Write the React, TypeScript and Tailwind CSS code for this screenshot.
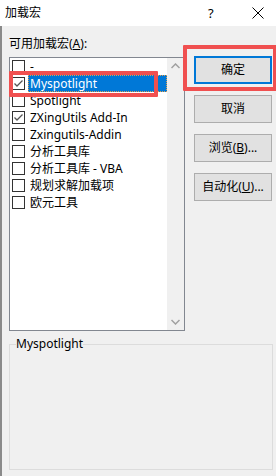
import React from "react";

const FONT = { fontFamily: '"Noto Sans", "Noto Sans CJK SC", sans-serif' };

type Item = { label: string; checked: boolean; selected?: boolean };

const items: Item[] = [
  { label: "-", checked: false },
  { label: "Myspotlight", checked: true, selected: true },
  { label: "Spotlight", checked: false },
  { label: "ZXingUtils Add-In", checked: true },
  { label: "Zxingutils-Addin", checked: false },
  { label: "分析工具库", checked: false },
  { label: "分析工具库 - VBA", checked: false },
  { label: "规划求解加载项", checked: false },
  { label: "欧元工具", checked: false },
];

function Box({ checked }: { checked: boolean }) {
  return (
    <div className="w-[13px] h-[13px] border border-[#333333] bg-white flex items-center justify-center shrink-0">
      {checked && (
        <svg width="11" height="11" viewBox="0 0 11 11">
          <polyline points="1.5,5.5 4,8 9.5,2.5" fill="none" stroke="#555555" strokeWidth="1.3" />
        </svg>
      )}
    </div>
  );
}

function Btn({ children, primary }: { children: React.ReactNode; primary?: boolean }) {
  return (
    <div
      className={
        "w-[78px] h-[28px] flex items-center justify-center bg-[#e1e1e1] text-[12px] text-black " +
        (primary ? "border-2 border-[#0078d7]" : "border border-[#adadad]")
      }
    >
      {children}
    </div>
  );
}

export default function App() {
  return (
    <div className="w-[276px] h-[476px] bg-[#f0f0f0] overflow-hidden text-black" style={FONT}>
      {/* title bar */}
      <div className="h-[26px] bg-white flex items-center pl-[5px] relative">
        <span className="text-[12px] leading-none">加载宏</span>
        <span className="absolute left-[208px] top-[5px] text-[13px] leading-[16px]">?</span>
        <svg className="absolute left-[252px] top-[7px]" width="12" height="12" viewBox="0 0 12 12">
          <path d="M0.5 0.5 L11.5 11.5 M11.5 0.5 L0.5 11.5" stroke="#000" strokeWidth="1" />
        </svg>
      </div>
      {/* body */}
      <div className="h-[450px] border-l-2 border-[#8a8a8a] pl-[7px] pt-[10px]">
        <div className="flex gap-[9px]">
          <div className="flex flex-col w-[176px]">
            <div className="h-[16px] leading-[16px] text-[12px]">
              可用加载宏(<span className="underline">A</span>):
            </div>
            <div className="relative mt-[5px] h-[274px] border border-[#828790] bg-white flex">
              <div className="flex-1 flex flex-col pt-[0px]">
                {items.map((it) => (
                  <div key={it.label} className="h-[17px] flex items-center pl-[2px]">
                    <Box checked={it.checked} />
                    {it.selected ? (
                      <div className="ml-[3px] flex-1 h-[17px] bg-[#0078d7] border border-dotted border-[#e0a050] text-white text-[12px] leading-[15px] pl-[1px]">
                        {it.label}
                      </div>
                    ) : (
                      <div className="ml-[3px] text-[12px] leading-[17px] pl-[2px]">{it.label}</div>
                    )}
                  </div>
                ))}
              </div>
              <div className="w-[17px] bg-[#f0f0f0] flex flex-col items-center justify-between py-[5px]">
                <svg width="9" height="6" viewBox="0 0 9 6">
                  <polyline points="0.5,5 4.5,1 8.5,5" fill="none" stroke="#a0a0a0" strokeWidth="1.5" />
                </svg>
                <svg width="9" height="6" viewBox="0 0 9 6">
                  <polyline points="0.5,1 4.5,5 8.5,1" fill="none" stroke="#a0a0a0" strokeWidth="1.5" />
                </svg>
              </div>
              {/* annotation */}
              <div className="absolute left-[-1px] top-[13px] w-[149px] h-[26px] border-4 border-[#f05050] rounded-[1px] pointer-events-none" />
            </div>
          </div>
          <div className="relative flex flex-col gap-[11px] mt-[20px]">
            <Btn primary>确定</Btn>
            <Btn>取消</Btn>
            <Btn>
              浏览(<span className="underline">B</span>)...
            </Btn>
            <Btn>
              自动化(<span className="underline">U</span>)...
            </Btn>
            <div className="absolute left-[-11px] top-[-11px] w-[94px] h-[46px] border-4 border-[#f05050] rounded-[1px] pointer-events-none" />
          </div>
        </div>
        <fieldset className="mt-[5px] w-[264px] h-[134px] border border-[#dcdcdc] px-[6px]">
          <legend className="text-[12px] leading-[16px] px-0">Myspotlight</legend>
        </fieldset>
      </div>
    </div>
  );
}
